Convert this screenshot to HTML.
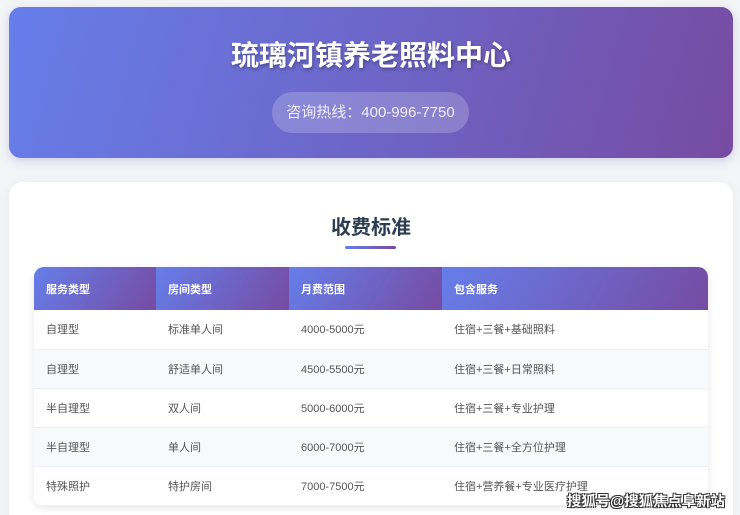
<!DOCTYPE html>
<html><head><meta charset="utf-8"><style>
*{margin:0;padding:0;box-sizing:border-box}
html{width:740px;height:515px;overflow:hidden}
body{width:740px;height:515px;overflow:hidden;background:#f4f5f7;font-family:"Liberation Sans","Noto Sans CJK SC",sans-serif;position:relative}
.hdr{position:absolute;left:9px;top:7px;width:724px;height:151px;border-radius:12px;background:linear-gradient(105deg,#667eea 0%,#6d66c8 50%,#764ba2 100%);box-shadow:0 3px 10px rgba(100,90,180,.25);text-align:center;color:#fff}
.hdr h1{font-size:28px;font-weight:bold;margin-top:30px;line-height:38px;text-shadow:1px 2px 3px rgba(0,0,0,.3)}
.pill{position:absolute;left:263px;top:85px;width:197px;height:41px;border-radius:21px;background:rgba(255,255,255,.2);font-size:15px;line-height:41px;color:#f0eefa}
.card{position:absolute;left:9px;top:182px;width:724px;height:333px;border-radius:14px 14px 0 0;background:#fff;box-shadow:0 3px 12px rgba(0,0,0,.06)}
.card h2{position:absolute;left:0;width:100%;top:29px;text-align:center;font-size:20px;font-weight:bold;color:#2c3e50}
.ul{position:absolute;left:336px;top:64px;width:51px;height:3px;background:linear-gradient(90deg,#667eea,#764ba2);border-radius:2px}
table{position:absolute;left:25px;top:85px;width:674px;border-collapse:collapse;border-radius:10px;overflow:hidden;box-shadow:0 2px 8px rgba(0,0,0,.1)}
th{height:43px;text-align:left;padding-left:12px;font-size:11px;font-weight:bold;color:#fff;background:linear-gradient(120deg,#667eea,#764ba2)}
td{height:39px;padding-left:12px;font-size:11px;color:#555;border-bottom:1px solid #eef0f3;background:#fff}
tr:nth-child(odd) td{background:#f8f9fa}
.wm{position:absolute;left:567px;top:490px;font-size:14.4px;font-weight:bold;color:#fff;text-shadow:-1px -1px 0 #333,1px -1px 0 #333,-1px 1px 0 #333,1px 1px 0 #333;white-space:nowrap}
</style></head><body>
<div class="hdr"><h1>琉璃河镇养老照料中心</h1><div class="pill">咨询热线：400-996-7750</div></div>
<div class="card"><h2>收费标准</h2><div class="ul"></div>
<table>
<tr><th style="width:122px">服务类型</th><th style="width:133px">房间类型</th><th style="width:153px">月费范围</th><th>包含服务</th></tr>
<tr><td>自理型</td><td>标准单人间</td><td>4000-5000元</td><td>住宿+三餐+基础照料</td></tr>
<tr><td>自理型</td><td>舒适单人间</td><td>4500-5500元</td><td>住宿+三餐+日常照料</td></tr>
<tr><td>半自理型</td><td>双人间</td><td>5000-6000元</td><td>住宿+三餐+专业护理</td></tr>
<tr><td>半自理型</td><td>单人间</td><td>6000-7000元</td><td>住宿+三餐+全方位护理</td></tr>
<tr><td>特殊照护</td><td>特护房间</td><td>7000-7500元</td><td>住宿+营养餐+专业医疗护理</td></tr>
</table></div>
<div class="wm">搜狐号@搜狐焦点阜新站</div>
</body></html>
